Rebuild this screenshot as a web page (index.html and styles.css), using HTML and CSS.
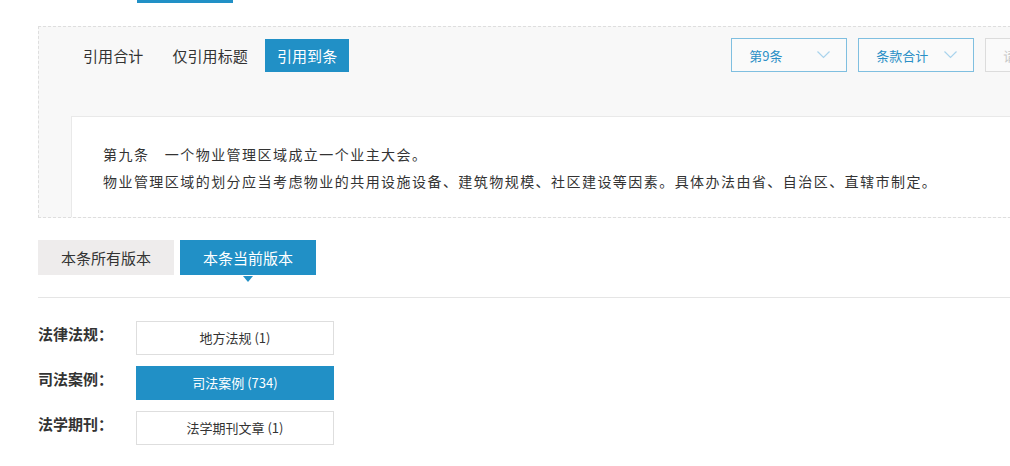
FILE: index.html
```html
<!DOCTYPE html>
<html lang="zh-CN">
<head>
  <meta charset="utf-8">
  <title>引用到条</title>
  <link rel="stylesheet" href="styles.css">
</head>
<body>
  <div class="page">
    <div class="top-mark"></div>

    <div class="cite-panel">
      <div class="cite-toolbar">
        <div class="cite-tabs">
          <span class="cite-tab">引用合计</span>
          <span class="cite-tab">仅引用标题</span>
          <span class="cite-tab active">引用到条</span>
        </div>
        <div class="cite-selects">
          <div class="select">
            <span>第9条</span>
            <svg class="chevron" width="13" height="8" viewBox="0 0 13 8"><path d="M0.5 0.5 L6.5 6.5 L12.5 0.5" fill="none" stroke="#a9d3ec" stroke-width="1.2"/></svg>
          </div>
          <div class="select">
            <span>条款合计</span>
            <svg class="chevron" width="13" height="8" viewBox="0 0 13 8"><path d="M0.5 0.5 L6.5 6.5 L12.5 0.5" fill="none" stroke="#a9d3ec" stroke-width="1.2"/></svg>
          </div>
          <div class="select disabled">
            <span>请选择</span>
          </div>
        </div>
      </div>

      <div class="article">
        <p>第九条　一个物业管理区域成立一个业主大会。</p>
        <p>物业管理区域的划分应当考虑物业的共用设施设备、建筑物规模、社区建设等因素。具体办法由省、自治区、直辖市制定。</p>
      </div>
    </div>

    <div class="version-tabs">
      <span class="version-tab">本条所有版本</span>
      <span class="version-tab active">本条当前版本</span>
    </div>

    <div class="ref-list">
      <div class="ref-row">
        <span class="ref-label">法律法规：</span>
        <span class="ref-btn">地方法规 (1)</span>
      </div>
      <div class="ref-row">
        <span class="ref-label">司法案例：</span>
        <span class="ref-btn active">司法案例 (734)</span>
      </div>
      <div class="ref-row">
        <span class="ref-label">法学期刊：</span>
        <span class="ref-btn">法学期刊文章 (1)</span>
      </div>
    </div>
  </div>
</body>
</html>
```

FILE: styles.css
```css
body {
  margin: 0;
  overflow: hidden;
  background: #fff;
  font-family: "Noto Sans CJK SC", "Noto Sans", sans-serif;
  color: #333;
}

.page {
  width: 1100px;
  padding-left: 38px;
}

.top-mark {
  width: 96px;
  height: 3px;
  margin-left: 99px;
  background: #2190c6;
}

.cite-panel {
  width: 1064px;
  margin-top: 23px;
  padding: 11px 0 0 32px;
  border: 1px dashed #dedede;
  background: #f8f8f8;
}

.cite-toolbar {
  display: flex;
  align-items: center;
}

.cite-tabs {
  display: flex;
  gap: 5px;
}

.cite-tab {
  height: 33px;
  line-height: 33px;
  padding: 0 12px;
  font-size: 15px;
  letter-spacing: 0.1px;
  color: #333;
}

.cite-tab.active {
  background: #2190c6;
  color: #fff;
}

.cite-selects {
  display: flex;
  gap: 11px;
  margin-left: 382px;
}

.select {
  box-sizing: border-box;
  width: 116px;
  height: 34px;
  padding: 0 16px 0 17px;
  border: 1px solid #7fbfe0;
  background: #fafafa;
  display: flex;
  align-items: center;
  justify-content: space-between;
  font-size: 13px;
  color: #2a8fc6;
}

.select.disabled {
  border-color: #dcdcdc;
  color: #c8c8c8;
}

.chevron {
  display: block;
}

.article {
  margin-top: 44px;
  height: 76px;
  padding: 24px 0 0 31px;
  border: 1px solid #e9e9e9;
  border-bottom: 0;
  background: #fff;
}

.article p {
  margin: 0;
  font-size: 14px;
  line-height: 27px;
  letter-spacing: 1.45px;
  color: #333;
}

.version-tabs {
  display: flex;
  gap: 6px;
  margin-top: 22px;
  padding-bottom: 22px;
  border-bottom: 1px solid #e5e5e5;
}

.version-tab {
  position: relative;
  width: 136px;
  height: 35px;
  line-height: 35px;
  text-align: center;
  font-size: 15px;
  background: #eeecec;
  color: #333;
}

.version-tab.active {
  background: #2190c6;
  color: #fff;
}

.version-tab.active::after {
  content: "";
  position: absolute;
  left: 63px;
  top: 36px;
  border-left: 5px solid transparent;
  border-right: 5px solid transparent;
  border-top: 6px solid #2190c6;
}

.ref-list {
  display: flex;
  flex-direction: column;
  gap: 11px;
  margin-top: 23px;
}

.ref-row {
  display: flex;
  align-items: flex-start;
}

.ref-label {
  width: 98px;
  line-height: 26px;
  font-size: 15px;
  font-weight: bold;
  color: #333;
}

.ref-btn {
  box-sizing: border-box;
  width: 198px;
  height: 34px;
  line-height: 32px;
  border: 1px solid #dedede;
  text-align: center;
  font-size: 13px;
  color: #333;
  background: #fff;
}

.ref-btn.active {
  border-color: #2190c6;
  background: #2190c6;
  color: #fff;
}
```
